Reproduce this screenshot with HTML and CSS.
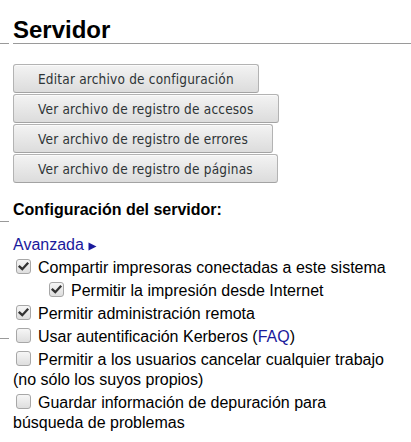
FILE: index.html
```html
<!DOCTYPE html>
<html lang="es">
<head>
<meta charset="utf-8">
<title>Servidor</title>
<link rel="stylesheet" href="styles.css">
</head>
<body>
<div class="page">
  <h2 class="title">Servidor</h2>

  <div class="buttons">
    <button class="btn" type="button">Editar archivo de configuración</button>
    <button class="btn" type="button">Ver archivo de registro de accesos</button>
    <button class="btn" type="button">Ver archivo de registro de errores</button>
    <button class="btn" type="button">Ver archivo de registro de páginas</button>
  </div>

  <p class="section">Configuración del servidor:</p>

  <p class="advanced"><a href="#" class="link">Avanzada</a> <svg class="tri" width="9" height="9" viewBox="0 0 9 9"><path d="M0.5 0.5 L8.5 4.5 L0.5 8.5 Z" fill="#1a1a9c"/></svg></p>

  <div class="options">
    <div class="opt"><span class="cb on"><svg width="15" height="15" viewBox="0 0 15 15"><path d="M3.6 7.6 L6.3 10.2 L11.4 4.6" fill="none" stroke="#333" stroke-width="2.3" stroke-linecap="square" stroke-linejoin="miter"/></svg></span>Compartir impresoras conectadas a este sistema</div>
    <div class="opt sub"><span class="cb on"><svg width="15" height="15" viewBox="0 0 15 15"><path d="M3.6 7.6 L6.3 10.2 L11.4 4.6" fill="none" stroke="#333" stroke-width="2.3" stroke-linecap="square" stroke-linejoin="miter"/></svg></span>Permitir la impresión desde Internet</div>
    <div class="opt"><span class="cb on"><svg width="15" height="15" viewBox="0 0 15 15"><path d="M3.6 7.6 L6.3 10.2 L11.4 4.6" fill="none" stroke="#333" stroke-width="2.3" stroke-linecap="square" stroke-linejoin="miter"/></svg></span>Permitir administración remota</div>
    <div class="opt mark"><span class="cb"></span>Usar autentificación Kerberos (<a href="#" class="link">FAQ</a>)</div>
    <div class="opt"><span class="cb"></span>Permitir a los usuarios cancelar cualquier trabajo (no sólo los suyos propios)</div>
    <div class="opt"><span class="cb"></span>Guardar información de depuración para búsqueda de problemas</div>
  </div>
</div>
</body>
</html>
```

FILE: styles.css
```css
html, body {
  margin: 0;
  padding: 0;
  background: #ffffff;
}

body {
  font-family: "Liberation Sans", Arial, sans-serif;
  font-size: 16px;
  color: #000;
}

.page {
  padding-left: 13px;
  position: relative;
}

.title {
  position: relative;
  margin: 16px 0 0 0;
  font-size: 24px;
  font-weight: bold;
  line-height: 27px;
  border-bottom: 1px solid #9a9a9a;
}

.title::before {
  content: "";
  position: absolute;
  left: -13px;
  bottom: -1px;
  width: 9px;
  height: 1px;
  background: #9a9a9a;
}

.buttons {
  display: flex;
  flex-direction: column;
  align-items: flex-start;
  gap: 1px;
  margin-top: 20px;
}

.btn {
  font-family: "DejaVu Sans Condensed", "DejaVu Sans", sans-serif;
  font-size: 13.5px;
  letter-spacing: 0.2px;
  color: #2e3436;
  height: 29px;
  padding: 0 24px 0 24px;
  border: 1px solid #b3b3b3;
  border-bottom-color: #a3a3a3;
  border-radius: 3px;
  background: linear-gradient(#f3f3f3, #dcdcdc);
  box-shadow: inset 0 1px 0 #fbfbfb;
  margin: 0;
  cursor: pointer;
}

.section {
  position: relative;
  margin: 18px 0 0 0;
  font-weight: bold;
  line-height: 18px;
}

.section::after {
  content: "";
  position: absolute;
  left: -13px;
  top: 20px;
  width: 9px;
  height: 1px;
  background: #9a9a9a;
}

.advanced {
  margin: 16px 0 0 0;
  line-height: 20px;
}

.link {
  color: #1a1a9c;
  text-decoration: none;
}

.tri {
  vertical-align: -1px;
}

.options {
  line-height: 20px;
  max-width: 382px;
}

.opt {
  position: relative;
}

.opt.sub {
  padding-left: 33px;
}

.opt.mark::before {
  content: "";
  position: absolute;
  left: -13px;
  top: 14px;
  width: 9px;
  height: 1px;
  background: #9a9a9a;
}

.cb {
  display: inline-block;
  box-sizing: border-box;
  width: 15px;
  height: 15px;
  margin: 4px 7px 0 3px;
  vertical-align: -1px;
  border: 1px solid #a7a7a7;
  border-radius: 3px;
  background: linear-gradient(#f6f6f6, #dedede);
  position: relative;
}

.cb svg {
  position: absolute;
  left: -1px;
  top: -1px;
}
```
